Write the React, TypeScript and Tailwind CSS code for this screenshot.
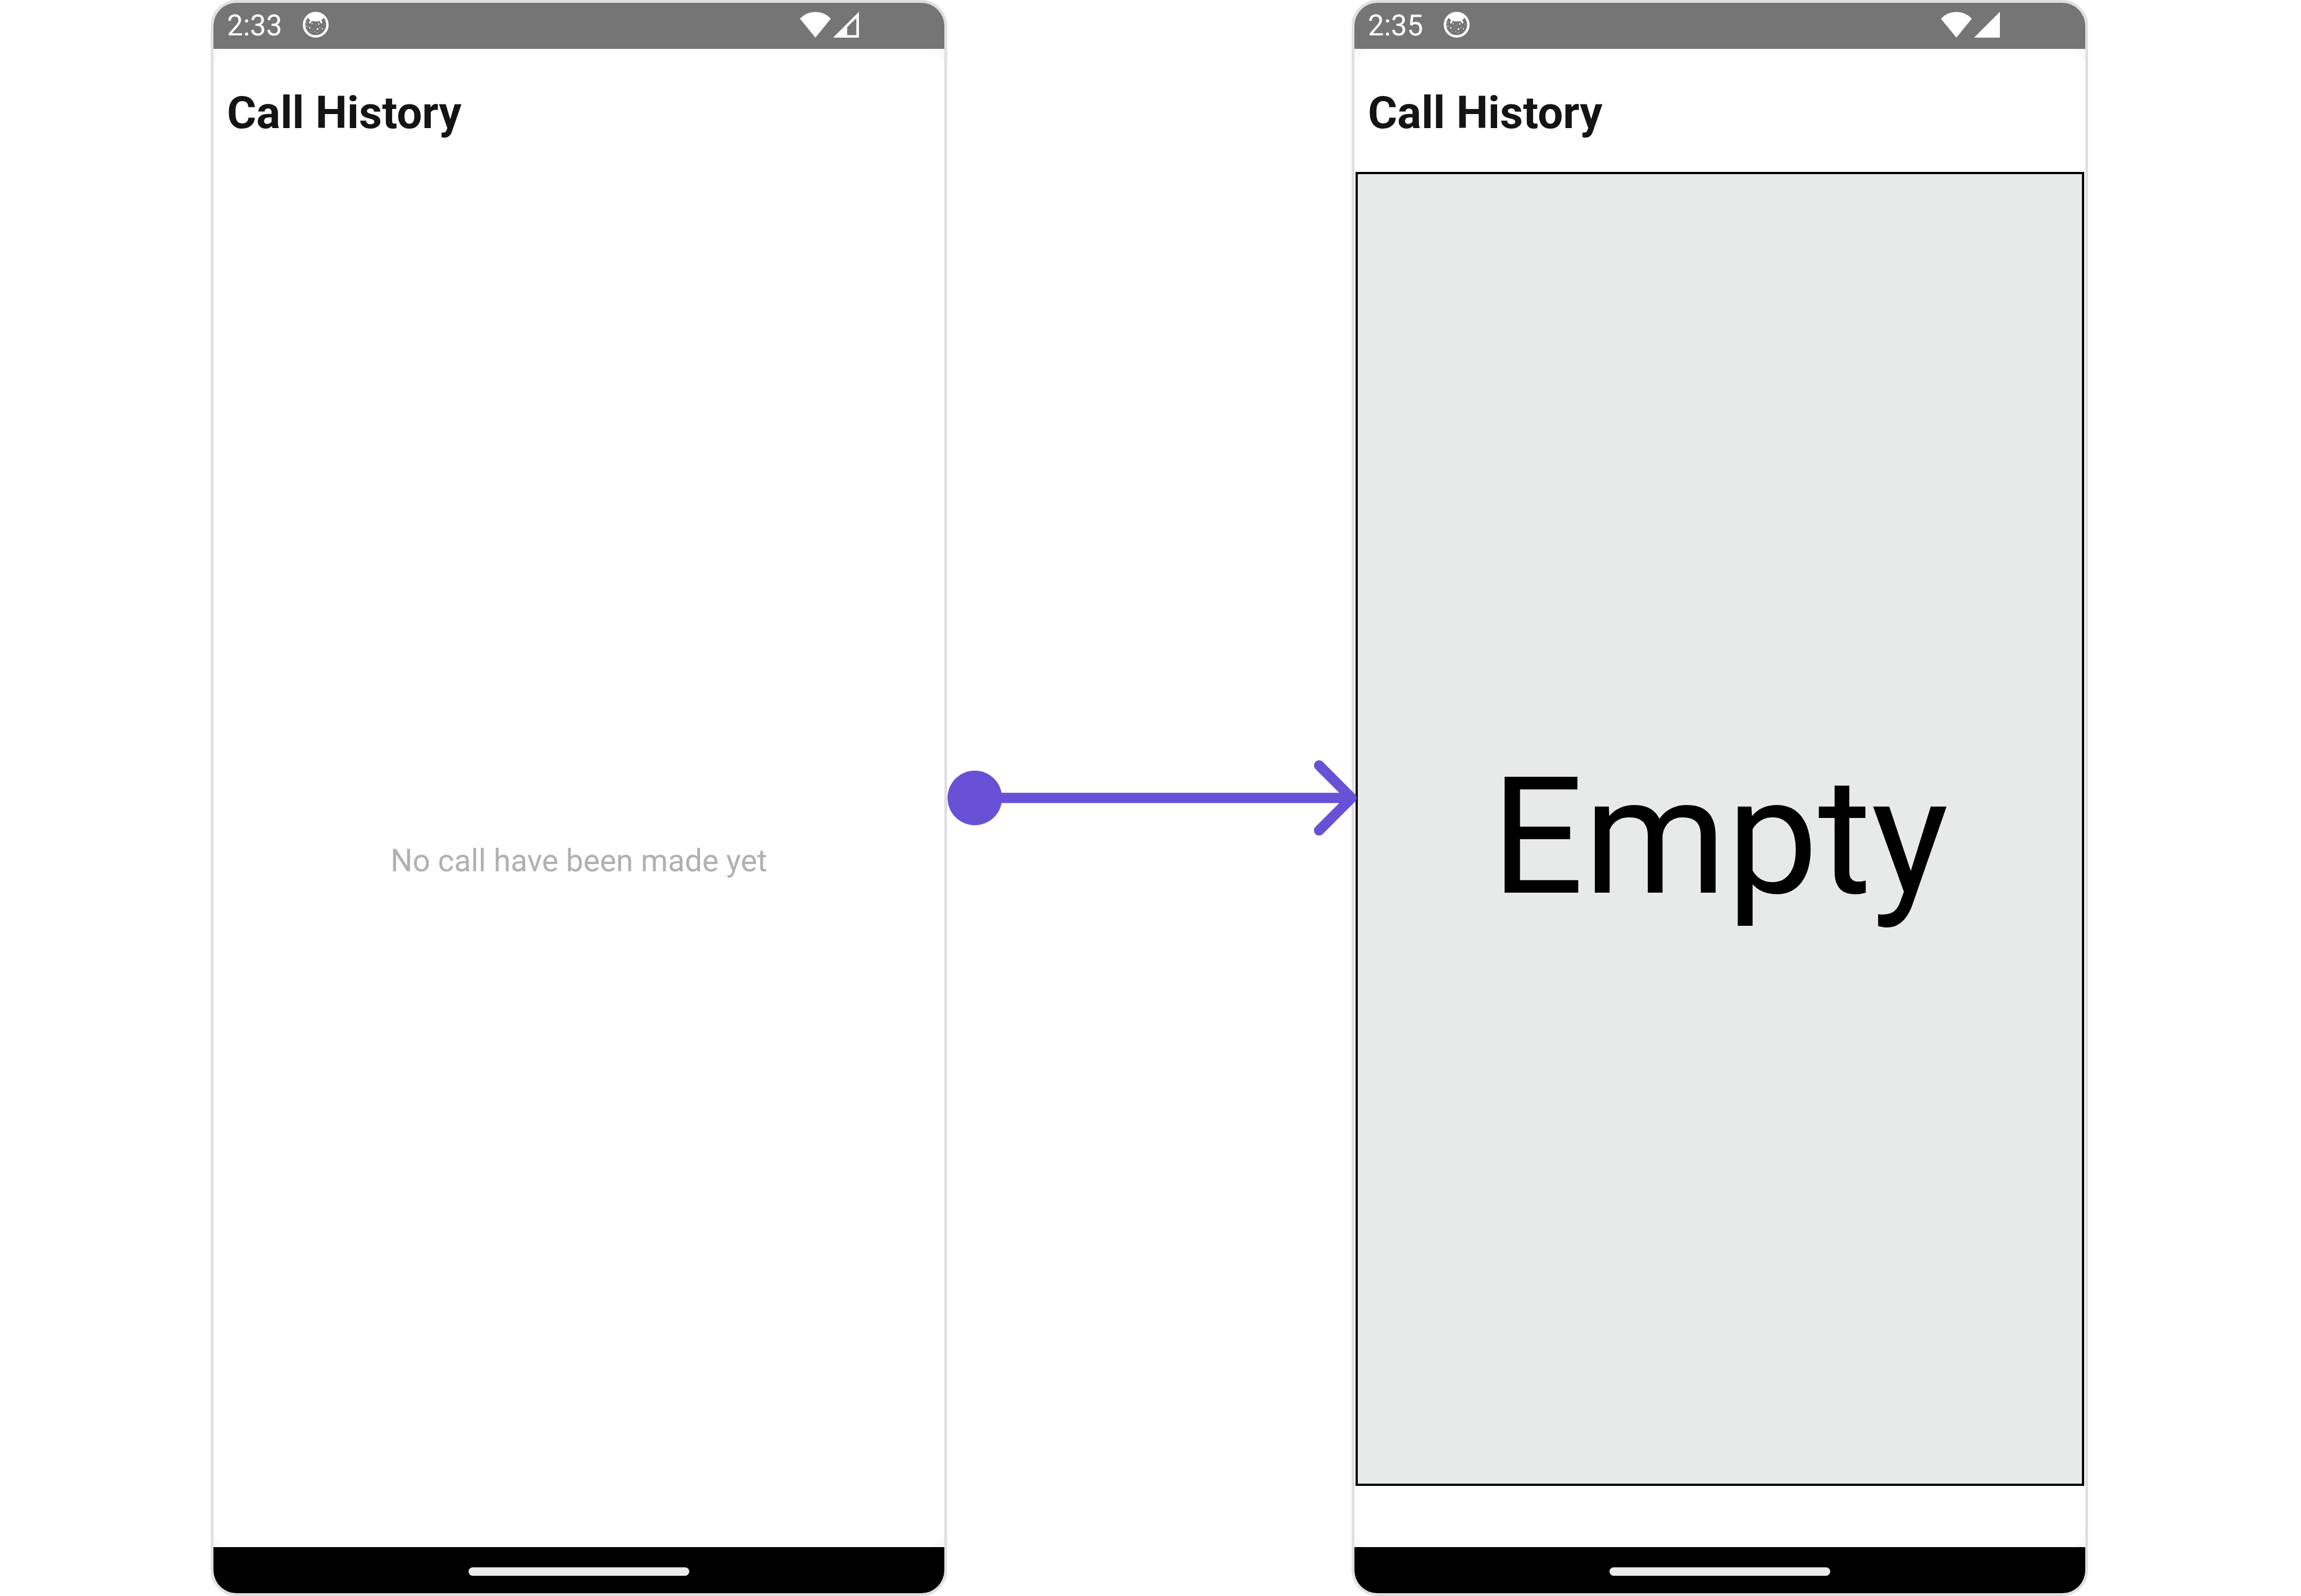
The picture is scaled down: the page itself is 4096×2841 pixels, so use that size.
type PhoneProps = {
  time: string;
  fullSignal?: boolean;
  children: React.ReactNode;
};

function FaceIcon() {
  return (
    <svg viewBox="0 0 50 50" className="size-[46px]" aria-hidden="true">
      <circle cx="25" cy="25" r="22.6" fill="none" stroke="#fff" strokeWidth="4.8" />
      <path d="M10 12 Q14 2 25 1 Q36 2 40 12 Q37.500 15.500 34 17 Q30 18.700 25 18.700 Q20 18.700 16 17 Q12.500 15.500 10 12 Z" fill="#fff" />
      <path d="M16.500 16 L13.700 20.800 M33.500 16 L36.300 20.800" fill="none" stroke="#fff" strokeWidth="3.400" strokeLinecap="round" />
      <g fill="#fff">
        <rect x="7" y="20" width="2" height="1" />
        <rect x="17" y="22" width="2" height="2" />
        <rect x="30" y="22" width="2" height="3" />
        <rect x="25" y="25" width="1" height="1" />
        <rect x="40" y="25" width="1" height="1" />
        <rect x="7" y="27" width="2" height="2" />
        <rect x="12" y="30" width="3" height="2" />
        <rect x="20" y="33" width="1" height="1" />
        <rect x="27" y="32" width="3" height="3" />
        <rect x="37" y="32" width="2" height="2" />
        <rect x="32" y="30" width="2" height="1" />
        <rect x="15" y="38" width="1" height="1" />
        <rect x="22" y="38" width="2" height="1" />
        <rect x="27" y="40" width="2" height="1" />
      </g>
    </svg>
  );
}

function WifiIcon() {
  return (
    <svg viewBox="0 0 60 50" className="h-[46px] w-[55px]" aria-hidden="true">
      <path d="M0 13.4 A40.5 40.5 0 0 1 60 13.4 L30 50 Z" fill="#fff" />
    </svg>
  );
}

function SignalIcon({ full }: { full?: boolean }) {
  return (
    <svg viewBox="0 0 50 50" className="size-[46px]" aria-hidden="true">
      <path
        fill="#fff"
        fillRule="evenodd"
        d={full ? "M0 50 L50 0 V50 Z" : "M0 50 L50 0 V50 Z M27.3 29.7 V45 H45 V12.3 Z"}
      />
    </svg>
  );
}

function Phone({ time, fullSignal, children }: PhoneProps) {
  return (
    <section className="flex flex-col overflow-hidden rounded-[46px] border-[5px] border-[#e0e0e0] bg-[#fafafa]">
      <div className="flex h-[82px] items-center bg-[#757575] pr-[152px] pb-1 pl-6 text-white">
        <span className="w-[135px] pt-1 text-[51px] leading-[60px]">{time}</span>
        <FaceIcon />
        <div className="ml-auto flex gap-1">
          <WifiIcon />
          <SignalIcon full={fullSignal} />
        </div>
      </div>
      <main className="flex flex-1 flex-col rounded-[32px] bg-white">
        <h1 className="flex h-[219px] items-center pt-2 pl-6 text-[80px] leading-[94px] font-bold text-[#141414]">
          Call History
        </h1>
        {children}
      </main>
      <div className="flex h-[82px] justify-center bg-black pt-9">
        <div className="h-[15px] w-[393px] rounded-lg bg-[#ebebeb]" />
      </div>
    </section>
  );
}

function Arrow() {
  return (
    <svg
      viewBox="0 0 790 150"
      className="relative z-10 h-auto w-full self-center overflow-visible"
      role="img"
      aria-label="becomes"
    >
      <circle cx="54" cy="75" r="53.3" fill="#6851d6" />
      <path
        d="M54 75 H790 M726.5 11.5 L790 75 L726.5 138.5"
        fill="none"
        stroke="#6851d6"
        strokeWidth="20"
        strokeLinecap="round"
        strokeLinejoin="round"
      />
    </svg>
  );
}

export default function App() {
  return (
    <div className="grid min-h-screen grid-cols-[375fr_1311fr_720fr_1311fr_379fr] bg-white font-[Roboto,sans-serif]">
      <div />
      <Phone time="2:33">
        <p className="flex flex-1 items-center justify-center pt-1 text-[55px] leading-[64px] text-[#b0b0b0]">
          No call have been made yet
        </p>
      </Phone>
      <Arrow />
      <Phone time="2:35" fullSignal>
        <div className="mx-0.5 mb-[109px] flex flex-1 items-center justify-center border-4 border-black bg-[#e8eae9] pt-7 text-[290px] leading-[340px] text-black">
          Empty
        </div>
      </Phone>
      <div />
    </div>
  );
}
